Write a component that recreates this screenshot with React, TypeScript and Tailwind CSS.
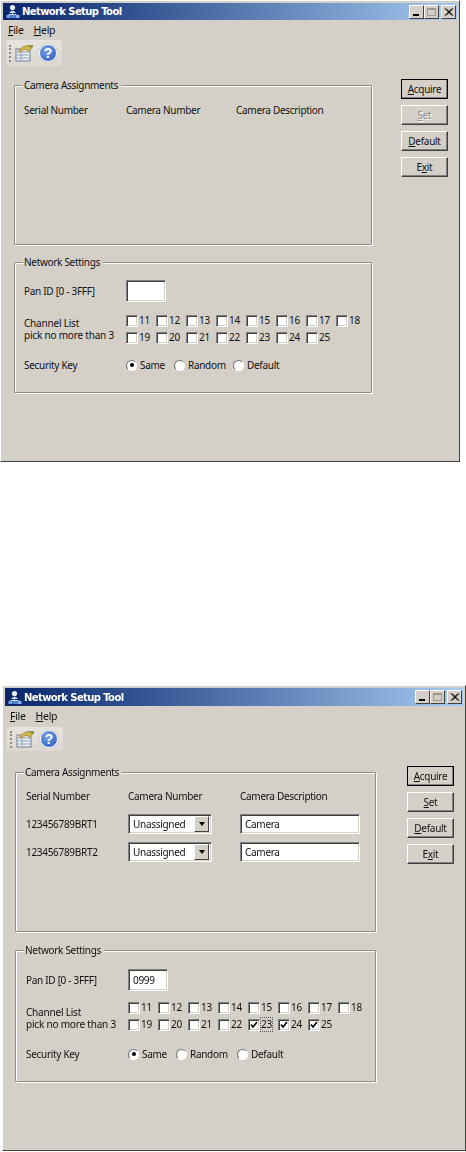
import type { ReactNode } from "react";

const FONT = "font-['Noto_Sans',Tahoma,sans-serif] text-[10px] leading-[13px] tracking-[-0.3px] text-[#111]";

const CHANNELS = [11, 12, 13, 14, 15, 16, 17, 18, 19, 20, 21, 22, 23, 24, 25];

function AppIcon() {
  return (
    <svg width="14" height="15" viewBox="0 0 14 15" className="shrink-0">
      <circle cx="6.5" cy="3.5" r="2.6" fill="#e8eef8" />
      <path d="M3 9 Q6.5 4 10 9 Z" fill="#cfdcf2" />
      <path d="M6.5 8v2M2.5 10.5h8" stroke="#c8d8f4" strokeWidth="1" />
      <rect x="0.5" y="11" width="4" height="3" fill="#6fa0e8" />
      <rect x="5" y="11" width="4" height="3" fill="#4f86dc" />
      <rect x="9.5" y="11" width="4" height="3" fill="#8bb4ee" />
    </svg>
  );
}

function CapButton({ kind, faded }: { kind: "min" | "max" | "close"; faded?: boolean }) {
  return (
    <div className="flex h-[14px] w-[15px] items-center justify-center border border-b-[#404040] border-l-white border-r-[#404040] border-t-white bg-[#d4d0c8]">
      <svg width="11" height="10" viewBox="0 0 11 10">
        {kind === "min" && <rect x="2" y="7" width="6" height="2" fill="#000" />}
        {kind === "max" && (
          <path d="M1.5 1.5h8v7h-8zM1.5 2.5h8" fill="none" stroke={faded ? "#9a9892" : "#000"} strokeWidth="1" />
        )}
        {kind === "close" && <path d="M2 1.5l7 7M3 1.5l7 7M9 1.5l-7 7M10 1.5l-7 7" stroke="#000" strokeWidth="1" />}
      </svg>
    </div>
  );
}

function TitleBar({ sizeClass }: { sizeClass: string }) {
  return (
    <div className={`flex items-center bg-gradient-to-r from-[#0a246a] to-[#a6caf0] pl-[3px] pr-[1px] ${sizeClass}`}>
      <AppIcon />
      <span className="ml-[2px] grow font-['DejaVu_Sans',sans-serif] text-[10px] font-bold tracking-[-0.6px] text-white">
        Network Setup Tool
      </span>
      <CapButton kind="min" />
      <CapButton kind="max" faded />
      <div className="w-[2px]" />
      <CapButton kind="close" />
    </div>
  );
}

function Toolbar({ className }: { className: string }) {
  return (
    <div className={`flex w-[56px] items-center rounded-[3px] bg-gradient-to-b from-[#e6e3dd] to-[#dcd9d2] pl-[3px] ${className}`}>
      <div className="h-[17px] w-[2px] border-l-2 border-dotted border-[#8d8a84]" />
      <svg width="20" height="18" viewBox="0 0 20 18" className="ml-[3px]">
        <rect x="2" y="5" width="14" height="12" fill="#eef1f6" stroke="#6b7a92" />
        <path d="M3 8h12M3 11h12M3 14h12M7 6v10" stroke="#8fa0b8" />
        <path d="M4 7 Q8 2 13 1.5 L19 1.5 L18 4 L14 8 L12.5 5.5 Q9 5.5 6 8 Z" fill="#d2b24a" stroke="#8a7a30" strokeWidth="0.5" />
        <path d="M13 1.5L19 1.5L18 4Z" fill="#7a8f3a" />
      </svg>
      <div className="ml-[5px] flex h-[18px] w-[18px] items-center justify-center rounded-full border border-white bg-[radial-gradient(circle_at_40%_35%,#7ea6ea,#1d4fb4)] font-['Liberation_Sans',sans-serif] text-[14px] font-bold text-white shadow-[0_0_1px_#4a6ab0]">
        ?
      </div>
    </div>
  );
}

function Group({ title, className, children }: { title: string; className: string; children: ReactNode }) {
  return (
    <fieldset className={`rounded-[1px] border border-[#8f8c85] shadow-[1px_1px_0_#fff,inset_1px_1px_0_#fff] ${className}`}>
      <legend className="ml-[8px] bg-[#d4d0c8] px-[1px] pr-[3px]">{title}</legend>
      {children}
    </fieldset>
  );
}

function Btn({ children, dflt, off }: { children: ReactNode; dflt?: boolean; off?: boolean }) {
  return (
    <div
      className={`flex h-[20px] w-[47px] items-center justify-center border border-b-[#404040] border-l-white border-r-[#404040] border-t-white shadow-[inset_-1px_-1px_0_#808080] ${
        dflt ? "outline outline-1 -outline-offset-1 outline-black" : ""
      } ${off ? "text-[#8f8d88] [text-shadow:1px_1px_0_#fff]" : ""}`}
    >
      {children}
    </div>
  );
}

function Sunken({ className, children }: { className: string; children?: ReactNode }) {
  return (
    <div
      className={`border border-b-white border-l-[#808080] border-r-white border-t-[#808080] bg-white shadow-[inset_1px_1px_0_#404040,inset_-1px_-1px_0_#d4d0c8] ${className}`}
    >
      {children}
    </div>
  );
}

function Check({ n, on, focus }: { n: number; on?: boolean; focus?: boolean }) {
  return (
    <div className="flex items-center">
      <Sunken className="flex h-[12px] w-[12px] shrink-0 items-center justify-center">
        {on && (
          <svg width="8" height="8" viewBox="0 0 8 8">
            <path d="M1 3.5l2 2.5 4-5" fill="none" stroke="#000" strokeWidth="1.6" />
          </svg>
        )}
      </Sunken>
      <span className={`ml-[1px] ${focus ? "outline outline-1 outline-dotted outline-[#555]" : ""}`}>{n}</span>
    </div>
  );
}

function Radio({ label, on, className }: { label: string; on?: boolean; className: string }) {
  return (
    <div className={`flex items-center ${className}`}>
      <div className="flex h-[11px] w-[11px] items-center justify-center rounded-full border border-b-white border-l-[#707070] border-r-white border-t-[#707070] bg-white">
        {on && <div className="h-[4px] w-[4px] rounded-full bg-black" />}
      </div>
      <span className="ml-[3px]">{label}</span>
    </div>
  );
}

function Combo() {
  return (
    <Sunken className="flex h-[20px] w-[84px] items-center justify-between pl-[4px] pr-[2px]">
      <span>Unassigned</span>
      <div className="flex h-[16px] w-[15px] items-center justify-center border border-b-[#404040] border-l-white border-r-[#404040] border-t-white bg-[#d4d0c8]">
        <div className="h-0 w-0 border-x-[3px] border-t-[4px] border-x-transparent border-t-black" />
      </div>
    </Sunken>
  );
}

function Menu({ className }: { className: string }) {
  return (
    <div className={`flex items-center gap-[10px] pl-[5px] text-[10.5px] ${className}`}>
      <span>
        <u>F</u>ile
      </span>
      <span>
        <u>H</u>elp
      </span>
    </div>
  );
}

function Buttons({ setOff, className }: { setOff?: boolean; className: string }) {
  return (
    <div className={`flex flex-col gap-[6px] ${className}`}>
      <Btn dflt>
        <span>
          <u>A</u>cquire
        </span>
      </Btn>
      <Btn off={setOff}>
        <span>
          <u>S</u>et
        </span>
      </Btn>
      <Btn>
        <span>
          <u>D</u>efault
        </span>
      </Btn>
      <Btn>
        <span>
          E<u>x</u>it
        </span>
      </Btn>
    </div>
  );
}

function Channels({ checked = [] as number[], focus = 0, className = "" }) {
  return (
    <div className={`grid w-[240px] grid-cols-8 gap-y-[4px] ${className}`}>
      {CHANNELS.map((n) => (
        <Check key={n} n={n} on={checked.includes(n)} focus={n === focus} />
      ))}
    </div>
  );
}

function FirstWindow() {
  return (
    <div className="h-[462px] w-[460px] border border-b-[#404040] border-l-white border-r-[#404040] border-t-white bg-[#d4d0c8] p-[2px]">
      <TitleBar sizeClass="h-[17px]" />
      <Menu className="h-[20px]" />
      <Toolbar className="ml-[3px] h-[26px]" />
      <div className="mt-[13px] flex">
        <div className="ml-[11px] flex w-[358px] flex-col gap-[11px]">
          <Group title="Camera Assignments" className="h-[166px] w-[358px]">
            <div className="grid grid-cols-[102px_110px_1fr] pl-[9px] pt-[12px]">
              <span>Serial Number</span>
              <span>Camera Number</span>
              <span>Camera Description</span>
            </div>
          </Group>
          <Group title="Network Settings" className="h-[137px] w-[358px]">
            <div className="mt-[11px] flex h-[22px] items-center pl-[9px]">
              <span className="w-[102px]">Pan ID [0 - 3FFF]</span>
              <Sunken className="h-[22px] w-[40px]" />
            </div>
            <div className="mt-[12px] flex pl-[9px]">
              <div className="mt-[3px] w-[102px] leading-[12px] tracking-[-0.2px]">
                Channel List
                <br />
                pick no more than 3
              </div>
              <Channels className="w-[236px]" />
            </div>
            <div className="mt-[14px] flex h-[14px] items-center pl-[9px]">
              <span className="w-[102px]">Security Key</span>
              <Radio label="Same" on className="w-[48px]" />
              <Radio label="Random" className="w-[59px]" />
              <Radio label="Default" className="" />
            </div>
          </Group>
        </div>
        <Buttons setOff className="ml-[29px]" />
      </div>
    </div>
  );
}

function SecondWindow() {
  return (
    <div className="ml-[2px] mt-[223px] h-[466px] w-[464px] border border-b-[#404040] border-l-white border-r-[#404040] border-t-white bg-[#d4d0c8] p-[2px] blur-[0.35px]">
      <TitleBar sizeClass="h-[18px]" />
      <Menu className="h-[21px]" />
      <Toolbar className="ml-[2px] h-[24px]" />
      <div className="mt-[15px] flex">
        <div className="ml-[10px] flex w-[361px] flex-col gap-[12px]">
          <Group title="Camera Assignments" className="h-[166px] w-[361px]">
            <div className="grid grid-cols-[102px_112px_1fr] pl-[10px] pt-[11px]">
              <span>Serial Number</span>
              <span>Camera Number</span>
              <span>Camera Description</span>
            </div>
            {["123456789BRT1", "123456789BRT2"].map((serial, i) => (
              <div key={serial} className={`grid grid-cols-[102px_112px_1fr] items-center pl-[10px] ${i === 0 ? "mt-[11px]" : "mt-[8px]"}`}>
                <span>{serial}</span>
                <Combo />
                <Sunken className="flex h-[20px] w-[120px] items-center pl-[4px]">Camera</Sunken>
              </div>
            ))}
          </Group>
          <Group title="Network Settings" className="h-[138px] w-[361px]">
            <div className="mt-[12px] flex h-[22px] items-center pl-[10px]">
              <span className="w-[102px]">Pan ID [0 - 3FFF]</span>
              <Sunken className="flex h-[22px] w-[40px] items-center pl-[4px]">0999</Sunken>
            </div>
            <div className="mt-[10px] flex pl-[10px]">
              <div className="mt-[5px] w-[102px] leading-[12px] tracking-[-0.2px]">
                Channel List
                <br />
                pick no more than 3
              </div>
              <Channels checked={[23, 24, 25]} focus={23} />
            </div>
            <div className="mt-[16px] flex h-[14px] items-center pl-[10px]">
              <span className="w-[102px]">Security Key</span>
              <Radio label="Same" on className="w-[48px]" />
              <Radio label="Random" className="w-[61px]" />
              <Radio label="Default" className="" />
            </div>
          </Group>
        </div>
        <Buttons className="ml-[31px]" />
      </div>
    </div>
  );
}

export default function App() {
  return (
    <div className={`h-[1152px] w-[466px] overflow-hidden bg-white ${FONT}`}>
      <FirstWindow />
      <SecondWindow />
    </div>
  );
}
